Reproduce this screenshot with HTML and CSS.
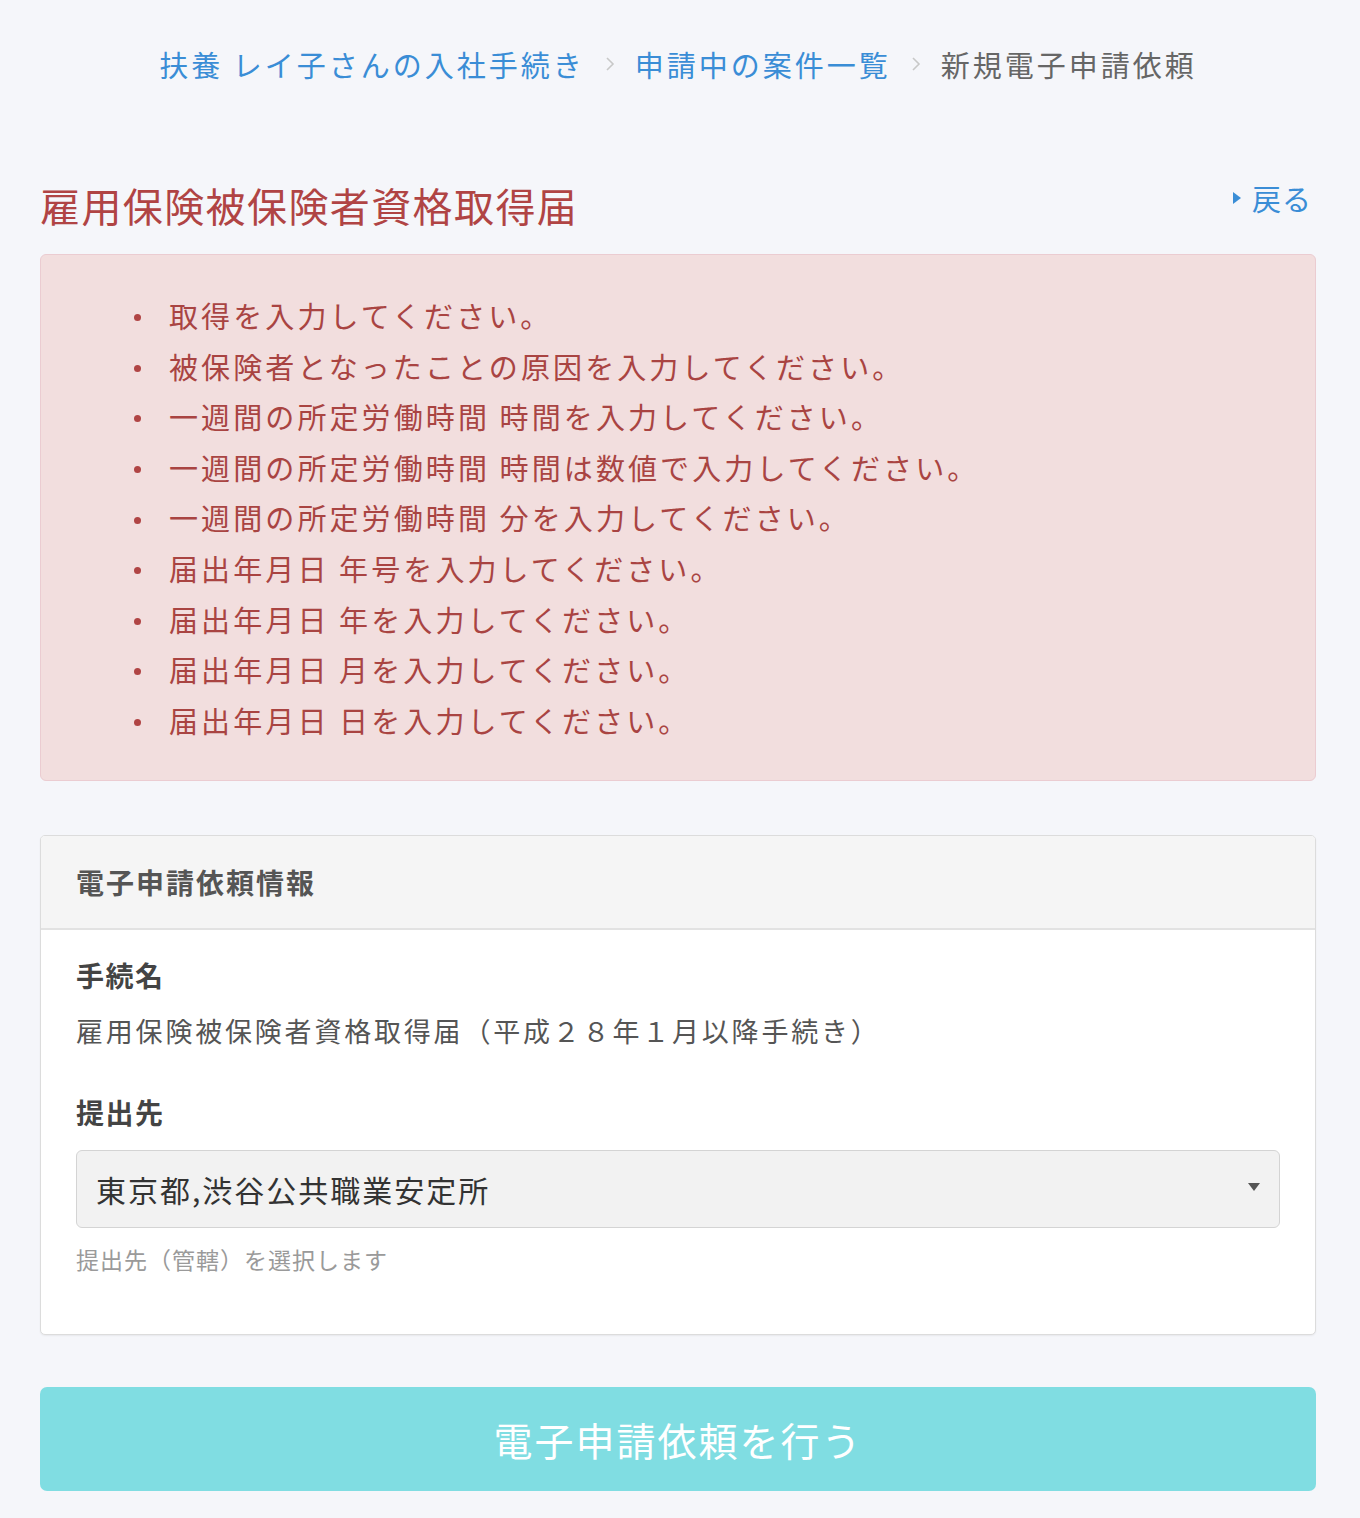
FILE: index.html
```html
<!DOCTYPE html>
<html lang="ja">
<head>
<meta charset="utf-8">
<title>新規電子申請依頼</title>
<link rel="stylesheet" href="styles.css">
</head>
<body>
<div class="page">
  <nav class="breadcrumb">
    <a class="crumb-link" href="#">扶養 レイ子さんの入社手続き</a>
    <svg class="crumb-sep" width="10" height="18" viewBox="0 0 10 18"><path d="M2 3 L8 9 L2 15" fill="none" stroke="#c8c8c8" stroke-width="1.6"/></svg>
    <a class="crumb-link" href="#">申請中の案件一覧</a>
    <svg class="crumb-sep" width="10" height="18" viewBox="0 0 10 18"><path d="M2 3 L8 9 L2 15" fill="none" stroke="#c8c8c8" stroke-width="1.6"/></svg>
    <span class="crumb-current">新規電子申請依頼</span>
  </nav>

  <div class="title-row">
    <h1 class="title">雇用保険被保険者資格取得届</h1>
    <a class="back" href="#"><svg class="back-icon" width="10" height="16" viewBox="0 0 10 16"><path d="M1 2 L9 8 L1 14 Z" fill="#3a8dd6"/></svg>戻る</a>
  </div>

  <div class="alert">
    <ul class="alert-list">
      <li><span class="dot"></span>取得を入力してください。</li>
      <li><span class="dot"></span>被保険者となったことの原因を入力してください。</li>
      <li><span class="dot"></span>一週間の所定労働時間 時間を入力してください。</li>
      <li><span class="dot"></span>一週間の所定労働時間 時間は数値で入力してください。</li>
      <li><span class="dot"></span>一週間の所定労働時間 分を入力してください。</li>
      <li><span class="dot"></span>届出年月日 年号を入力してください。</li>
      <li><span class="dot"></span>届出年月日 年を入力してください。</li>
      <li><span class="dot"></span>届出年月日 月を入力してください。</li>
      <li><span class="dot"></span>届出年月日 日を入力してください。</li>
    </ul>
  </div>

  <section class="panel">
    <div class="panel-head">電子申請依頼情報</div>
    <div class="panel-body">
      <div class="field-label">手続名</div>
      <div class="field-value">雇用保険被保険者資格取得届（平成２８年１月以降手続き）</div>
      <div class="field-label label-gap">提出先</div>
      <div class="select">
        <span class="select-text">東京都,渋谷公共職業安定所</span>
        <svg class="select-arrow" width="12" height="10" viewBox="0 0 12 10"><path d="M0 1 L12 1 L6 9 Z" fill="#555"/></svg>
      </div>
      <div class="help">提出先（管轄）を選択します</div>
    </div>
  </section>

  <button class="submit" type="button">電子申請依頼を行う</button>
</div>
</body>
</html>
```

FILE: styles.css
```css
* { box-sizing: border-box; }

html, body {
  margin: 0;
  padding: 0;
  background: #f5f6fa;
}

body {
  font-family: "Noto Sans CJK JP", "Noto Sans", "Liberation Sans", sans-serif;
  color: #333;
}

.page {
  padding: 0 44px 26px 40px;
}

.breadcrumb {
  margin-top: 44px;
  height: 40px;
  display: flex;
  justify-content: center;
  align-items: center;
  gap: 20px;
  font-size: 29px;
  line-height: 40px;
  letter-spacing: 3px;
}

.crumb-link {
  color: #3a8dd6;
  text-decoration: none;
}

.crumb-current {
  color: #666;
}

.crumb-sep {
  display: block;
}

.title-row {
  margin-top: 93px;
  display: flex;
  justify-content: space-between;
  align-items: flex-start;
}

.title {
  margin: 0;
  font-size: 40px;
  line-height: 56px;
  font-weight: normal;
  color: #b04444;
  letter-spacing: 1.4px;
}

.back {
  margin-top: 1px;
  margin-right: 4px;
  display: flex;
  align-items: center;
  gap: 10px;
  font-size: 29px;
  line-height: 40px;
  color: #3a8dd6;
  text-decoration: none;
  letter-spacing: 1px;
}

.alert {
  margin-top: 21px;
  background: #f2dede;
  border: 1px solid #ebccd1;
  border-radius: 6px;
  padding: 35px 0 35px;
}

.alert-list {
  list-style: none;
  margin: 0;
  padding: 0 0 0 93px;
}

.alert-list li {
  display: flex;
  align-items: center;
  gap: 28px;
  font-size: 29px;
  line-height: 50.6px;
  color: #a94442;
  letter-spacing: 3.1px;
}

.dot {
  flex: none;
  width: 7px;
  height: 7px;
  border-radius: 50%;
  background: #b04444;
  margin-top: 5px;
}

.panel {
  margin-top: 54px;
  background: #fff;
  border: 1px solid #dcdcdc;
  border-radius: 5px;
  box-shadow: 0 1px 2px rgba(0, 0, 0, 0.06);
  overflow: hidden;
}

.panel-head {
  height: 94px;
  background: #f5f5f5;
  border-bottom: 2px solid #e2e2e2;
  padding-left: 35px;
  display: flex;
  align-items: center;
  font-size: 28px;
  font-weight: bold;
  color: #555;
  letter-spacing: 2px;
}

.panel-body {
  padding: 25px 35px 58px;
}

.field-label {
  font-size: 28px;
  line-height: 40px;
  font-weight: bold;
  color: #444;
  letter-spacing: 1.5px;
}

.field-value {
  margin-top: 16px;
  font-size: 27px;
  line-height: 40px;
  color: #555;
  letter-spacing: 2.8px;
}

.label-gap {
  margin-top: 41px;
}

.select {
  margin-top: 18px;
  height: 78px;
  background: #f2f2f2;
  border: 1px solid #d4d4d4;
  border-radius: 6px;
  display: flex;
  align-items: center;
  justify-content: space-between;
  padding: 0 19px 0 19px;
  width: 1204px;
}

.select-text {
  font-size: 30px;
  color: #333;
  letter-spacing: 2px;
}

.select-arrow {
  display: block;
  margin-top: -4px;
}

.help {
  margin-top: 14px;
  font-size: 23px;
  line-height: 34px;
  color: #9a9a9a;
  letter-spacing: 1px;
}

.submit {
  display: block;
  width: 100%;
  margin-top: 52px;
  height: 104px;
  border: none;
  border-radius: 7px;
  background: #80dde2;
  color: #fff;
  font-family: "Noto Sans CJK JP", "Noto Sans", sans-serif;
  font-size: 39px;
  letter-spacing: 2px;
  cursor: default;
}
```
